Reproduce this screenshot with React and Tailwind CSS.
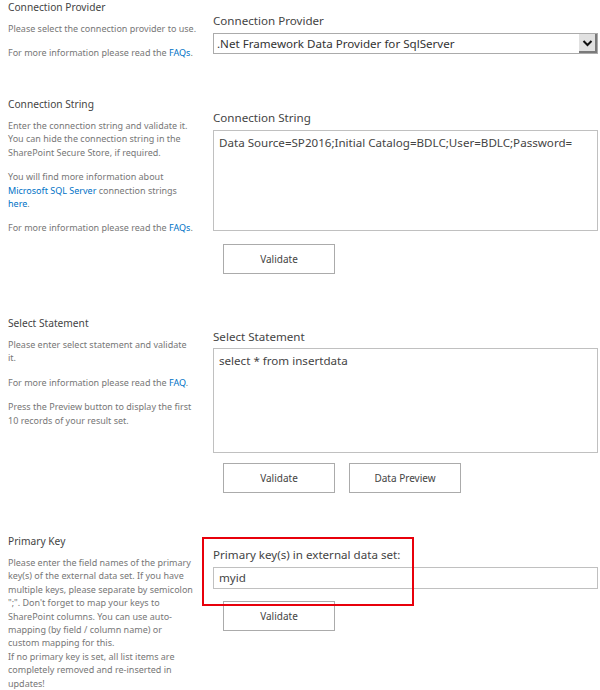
import React from "react";

const Link = ({ children }) => <span className="text-[#0072c6]">{children}</span>;

function Left({ title, paras }) {
  return (
    <div className="w-[213px] shrink-0 pl-2 pr-2">
      <div className="text-[10.2px] leading-[14px] text-[#444]">{title}</div>
      {paras.map((p, i) => (
        <div key={i} className={"text-[9px] leading-[13.4px] text-[#777] whitespace-nowrap " + (i === 0 ? "mt-[8px]" : "mt-[11px]")}>
          {p}
        </div>
      ))}
    </div>
  );
}

function Label({ children }) {
  return <div className="pt-[13px] text-[11.6px] leading-[16px] text-[#444] whitespace-nowrap">{children}</div>;
}

function Btn({ children }) {
  return (
    <div className="w-[112px] h-[30px] border border-[#ababab] bg-white flex items-center justify-center text-[10px] text-[#444]">
      {children}
    </div>
  );
}

export default function App() {
  return (
    <div className="w-[600px] h-[690px] bg-white overflow-hidden font-['Noto_Sans',sans-serif]">
      {/* Section 1 */}
      <div className="flex h-[97px]">
        <Left
          title="Connection Provider"
          paras={[
            <>Please select the connection provider to use.</>,
            <>For more information please read the <Link>FAQs</Link>.</>,
          ]}
        />
        <div className="w-[385px]">
          <Label>Connection Provider</Label>
          <div className="mt-[4px] h-[21px] border border-[#ababab] flex items-stretch bg-white">
            <div className="flex-1 pl-[3px] text-[11.6px] leading-[19px] text-[#333]">.Net Framework Data Provider for SqlServer</div>
            <div className="w-[18px] bg-[#e1e1e1] border-r-2 border-b-2 border-[#7a7a7a] flex items-center justify-center">
              <svg width="11" height="8" viewBox="0 0 11 8">
                <polyline points="1.5,2 5.5,6 9.5,2" fill="none" stroke="#111" strokeWidth="2" />
              </svg>
            </div>
          </div>
        </div>
      </div>

      {/* Section 2 */}
      <div className="flex h-[219px]">
        <Left
          title="Connection String"
          paras={[
            <>Enter the connection string and validate it.<br />You can hide the connection string in the<br />SharePoint Secure Store, if required.</>,
            <>You will find more information about<br /><Link>Microsoft SQL Server</Link> connection strings<br /><Link>here</Link>.</>,
            <>For more information please read the <Link>FAQs</Link>.</>,
          ]}
        />
        <div className="w-[385px]">
          <Label>Connection String</Label>
          <div className="mt-[4px] h-[101px] border border-[#c0c0c0] px-[5px] pt-[3px] text-[11.6px] leading-[18px] text-[#444] whitespace-nowrap">
            Data Source=SP2016;Initial Catalog=BDLC;User=BDLC;Password=
          </div>
          <div className="mt-[13px] pl-[10px]">
            <Btn>Validate</Btn>
          </div>
        </div>
      </div>

      {/* Section 3 */}
      <div className="flex h-[218px]">
        <Left
          title="Select Statement"
          paras={[
            <>Please enter select statement and validate<br />it.</>,
            <>For more information please read the <Link>FAQ</Link>.</>,
            <>Press the Preview button to display the first<br />10 records of your result set.</>,
          ]}
        />
        <div className="w-[385px]">
          <Label>Select Statement</Label>
          <div className="mt-[3px] h-[105px] border border-[#c0c0c0] px-[5px] pt-[3px] text-[11.6px] leading-[18px] text-[#444]">
            select * from insertdata
          </div>
          <div className="mt-[10px] pl-[10px] flex gap-[14px]">
            <Btn>Validate</Btn>
            <Btn>Data Preview</Btn>
          </div>
        </div>
      </div>

      {/* Section 4 */}
      <div className="flex relative">
        <Left
          title="Primary Key"
          paras={[
            <>Please enter the field names of the primary<br />key(s) of the external data set. If you have<br />multiple keys, please separate by semicolon<br />";". Don't forget to map your keys to<br />SharePoint columns. You can use auto-<br />mapping (by field / column name) or<br />custom mapping for this.<br />If no primary key is set, all list items are<br />completely removed and re-inserted in<br />updates!</>,
          ]}
        />
        <div className="w-[385px]">
          <Label>Primary key(s) in external data set:</Label>
          <div className="mt-[4px] h-[22px] border border-[#c0c0c0] px-[5px] text-[11.6px] leading-[20px] text-[#444]">
            myid
          </div>
          <div className="mt-[12px] pl-[10px]">
            <Btn>Validate</Btn>
          </div>
        </div>
        <div className="absolute left-[202px] top-[3px] w-[212px] h-[69px] border-2 border-[#e8000b] pointer-events-none" />
      </div>
    </div>
  );
}
